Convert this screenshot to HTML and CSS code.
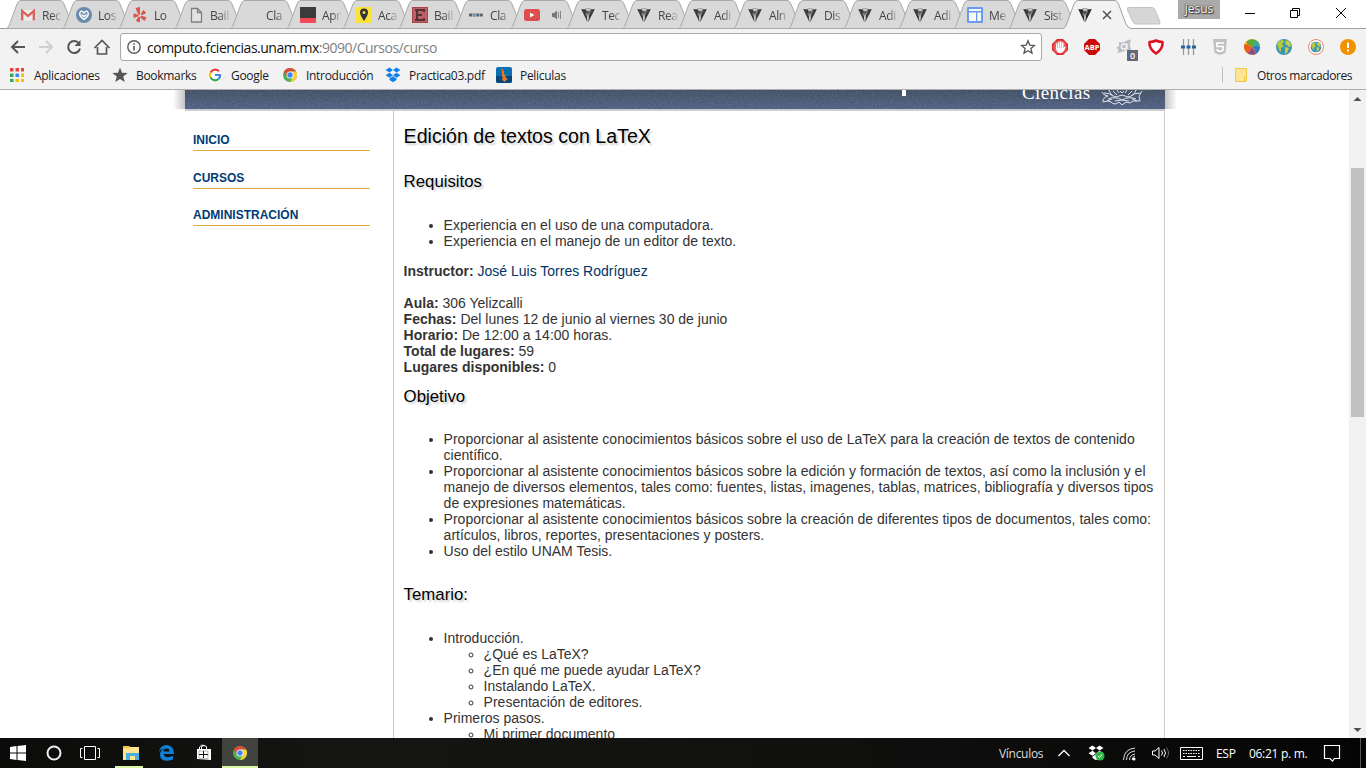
FILE: index.html
```html
<!DOCTYPE html>
<html lang="es">
<head>
<meta charset="utf-8">
<title>Edición de textos con LaTeX</title>
<link rel="stylesheet" href="styles.css">
</head>
<body>
<svg class="defs" width="0" height="0">
  <defs>
    <symbol id="tab" viewBox="0 0 68 29"><path d="M0.5 28.5C2 28 3 26 4 23L11 4Q12.500 .5 15 .5H54Q56.500 .5 58 4L66 24Q67 28 68 28.500Z" fill="#d9d9d9" stroke="#a9a9a9"/></symbol>
    <symbol id="tab-on" viewBox="0 0 68 29"><path d="M0 29C2 28 3 26 4 23L11 4Q12.500 .5 15 .5H52Q54 .5 55.500 4L63 24Q65 28 68 29Z" fill="#f2f2f2"/><path d="M0 28.500C2 28 3 26 4 23L11 4Q12.500 .5 15 .5H52Q54 .5 55.500 4L63 24Q65 28 68 28.500" fill="none" stroke="#a0a0a0"/></symbol>
    <symbol id="shield" viewBox="0 0 16 16"><path d="M3.500 3L6 1h4l2.500 2L11 9l-2 6H7L5 9Z" fill="#a8a8a8"/><path d="M1.200 2L6 2.500 6.500 5 5.500 7 7 9v5L3.500 7ZM14.800 2L10.500 2.500 10.500 5 9 8 8.500 14l4-7Z" fill="#2c2c2c"/><path d="M6 4h3.500l.5 1.500L7.500 8 6 6.500Z" fill="#555"/><path d="M6.500 2h3v1.500h-3zM7 9.500h1.500V12H7z" fill="#d0d0d0"/></symbol>
    <symbol id="chrome" viewBox="0 0 16 16"><circle cx="8" cy="8" r="7" fill="#4caf50"/><path d="M1.900 4.500A7 7 0 0 1 14.100 4.500H8L5 9.700Z" fill="#e0483b"/><path d="M14.100 4.500A7 7 0 0 1 8 15l3-5.300L8 4.500Z" fill="#fbcf3a"/><circle cx="8" cy="8" r="3.500" fill="#fff"/><circle cx="8" cy="8" r="2.700" fill="#4285f4"/></symbol>
    <symbol id="dropbox" viewBox="0 0 16 16"><path d="M4.500 .5L8 3 4.500 5.500 .5 3ZM11.500 .5L15.500 3 11.500 5.500 8 3ZM4.500 5.700L8 8.200 4.500 10.700 .5 8.200ZM11.500 5.700L15.500 8.200 11.500 10.700 8 8.200ZM8 9.300l3.500 2.300V13L8 15.200 4.500 13v-1.400Z"/></symbol>
    <symbol id="globe" viewBox="0 0 16 16"><circle cx="8" cy="8" r="8" fill="#3b93b5"/><path d="M1 5Q3 1 7 1L8 3 6 5l2 2-3 2v4L3 11 2 8Z" fill="#b7ca3c"/><path d="M10 1l4 2 1 4-2 1-2-2-2-1ZM9 8l4 1-2 5-2 1Z" fill="#c8ce40"/></symbol>
  </defs>
</svg>

<header class="browser">
  <div class="tabstrip">
    <div class="tab"><svg class="shape"><use href="#tab"/></svg><svg class="fav" viewBox="0 0 16 16"><path d="M1 3h14v11H1z" fill="#eee"/><path d="M2.200 13.500V4L8 9l5.800-5v9.500" fill="none" stroke="#d9534a" stroke-width="2.300"/></svg><span class="label">Rec</span></div>
    <div class="tab"><svg class="shape"><use href="#tab"/></svg><svg class="fav" viewBox="0 0 16 16"><circle cx="8" cy="8" r="8" fill="#5d82a8"/><path d="M8 6Q5.500 2.500 4 5.500T8 12.500Q13.500 8.500 12 5.500T8 6ZM5.500 7.500L8 9.500l2.500-2" fill="none" stroke="#fff" stroke-width="1.500"/></svg><span class="label">Los</span></div>
    <div class="tab"><svg class="shape"><use href="#tab"/></svg><svg class="fav" viewBox="0 0 16 16" fill="#dc4a3f"><path d="M4 1.500l3.500-1.200v7L6.700 7.500ZM9 7l2.500-3.500 2.300 2.300-4 2ZM9 9.200l5 1.300-1.500 3L8.800 10.500ZM7.500 10V15l-3-1.200 2-3.800ZM6.500 8.600L2 10.500V6.800Z" stroke="#dc4a3f" stroke-linejoin="round"/></svg><span class="label">Lo</span></div>
    <div class="tab"><svg class="shape"><use href="#tab"/></svg><svg class="fav" viewBox="0 0 16 16"><path d="M3.500 1.500h6l4 4v9.500h-10zM9.500 1.500v4h4" fill="#e5e5e5" stroke="#777" stroke-width="1.300"/></svg><span class="label">Bail</span></div>
    <div class="tab"><svg class="shape"><use href="#tab"/></svg><svg class="fav"></svg><span class="label">Cla</span></div>
    <div class="tab"><svg class="shape"><use href="#tab"/></svg><svg class="fav" viewBox="0 0 16 16"><path d="M0 0h16v11H0z" fill="#2b2b2b"/><path d="M0 11h16v5H0z" fill="#f53c48"/></svg><span class="label">Apr</span></div>
    <div class="tab"><svg class="shape"><use href="#tab"/></svg><svg class="fav" viewBox="0 0 16 16"><path d="M0 0h16v16H0z" fill="#fee32a"/><path d="M8 1.500a4 4 0 0 1 4 4Q12 8 8 14 4 8 4 5.500A4 4 0 0 1 8 1.500Z" fill="#222"/><circle cx="8" cy="5.500" r="1.500" fill="#fbe032"/></svg><span class="label">Aca</span></div>
    <div class="tab"><svg class="shape"><use href="#tab"/></svg><svg class="fav" viewBox="0 0 16 16"><path d="M0 0h16v16H0z" fill="#a8323a"/><path d="M1 1h14v14H1z" fill="#bd525a"/><path d="M12 5V3H5v10h7v-2M5 8h5M3 3h3M3 13h3" fill="none" stroke="#402027" stroke-width="2"/></svg><span class="label">Bail</span></div>
    <div class="tab"><svg class="shape"><use href="#tab"/></svg><svg class="fav" viewBox="0 0 16 16"><path d="M1 8h14" stroke="#555" stroke-width="3" stroke-dasharray="3 .6"/><path d="M5 8h4" stroke="#5c98d0" stroke-width="2"/></svg><span class="label">Cla</span></div>
    <div class="tab"><svg class="shape"><use href="#tab"/></svg><svg class="fav" viewBox="0 0 16 16"><rect y="2" width="16" height="12" rx="2.500" fill="#df4040"/><path d="M6 5.500v5L10.500 8z" fill="#fff"/></svg><svg class="audio" viewBox="0 0 12 12"><path d="M1 4h2l3-2.500v9L3 8H1z" fill="#777"/><path d="M7.500 3v6M9.500 2v8" stroke="#888"/></svg></div>
    <div class="tab"><svg class="shape"><use href="#tab"/></svg><svg class="fav"><use href="#shield"/></svg><span class="label">Tec</span></div>
    <div class="tab"><svg class="shape"><use href="#tab"/></svg><svg class="fav"><use href="#shield"/></svg><span class="label">Rea</span></div>
    <div class="tab narrow"><svg class="shape"><use href="#tab"/></svg><svg class="fav"><use href="#shield"/></svg><span class="label">Adi</span></div>
    <div class="tab narrow"><svg class="shape"><use href="#tab"/></svg><svg class="fav"><use href="#shield"/></svg><span class="label">Aln</span></div>
    <div class="tab narrow"><svg class="shape"><use href="#tab"/></svg><svg class="fav"><use href="#shield"/></svg><span class="label">Dis</span></div>
    <div class="tab narrow"><svg class="shape"><use href="#tab"/></svg><svg class="fav"><use href="#shield"/></svg><span class="label">Adi</span></div>
    <div class="tab narrow"><svg class="shape"><use href="#tab"/></svg><svg class="fav"><use href="#shield"/></svg><span class="label">Adi</span></div>
    <div class="tab narrow"><svg class="shape"><use href="#tab"/></svg><svg class="fav" viewBox="0 0 16 16"><rect width="16" height="16" rx="1" fill="#5c96f2"/><path d="M2 2h12v2H2zM2 5.500h7V14H2zM10.300 5.500H14V14h-3.700z" fill="#fff"/></svg><span class="label">Me</span></div>
    <div class="tab narrow"><svg class="shape"><use href="#tab"/></svg><svg class="fav"><use href="#shield"/></svg><span class="label">Sist</span></div>
    <div class="tab narrow active"><svg class="shape"><use href="#tab-on"/></svg><svg class="fav"><use href="#shield"/></svg><svg class="close" viewBox="0 0 10 10"><path d="M1 1l8 8M9 1L1 9" stroke="#555" stroke-width="1.600"/></svg></div>
    <svg class="newtab" viewBox="0 0 36 18"><path d="M3 .5H26Q28 .5 29 3L34 15Q34.500 17 33 17H10Q8 17 7 15L1.500 3Q.5.5 3 .5Z" fill="#d6d6d6" stroke="#c2c2c2"/></svg>
    <span class="user">jesus</span>
    <svg class="winbtns" viewBox="0 0 120 28" fill="none" stroke="#000"><path d="M3 13.500h10M48.500 10.500h7v7h-7zM50.500 10.500v-2h7v7h-2M94 8l10 10M104 8L94 18"/></svg>
  </div>

  <div class="toolbar">
    <svg class="nav" viewBox="0 0 112 24" fill="none" stroke-width="2"><path d="M25 12H12.500M18 6l-6 6 6 6" stroke="#555"/><path d="M39 12h12.500M46 6l6 6-6 6" stroke="#cfcfcf"/><path d="M79 8.500A6 6 0 1 0 80 13.500" stroke="#555"/><path d="M80.500 5v6h-6z" fill="#555"/><path d="M94.500 13L102 5.500 109.500 13M97.500 12v7h9v-7" stroke="#555" stroke-width="1.700"/></svg>
    <div class="omnibox">
      <svg class="info" viewBox="0 0 14 14"><circle cx="7" cy="7" r="6.200" fill="none" stroke="#5a5a5a" stroke-width="1.400"/><path d="M7 6v4.500M7 3.300v1.500" stroke="#5a5a5a" stroke-width="1.600"/></svg>
      <span class="url">computo.fciencias.unam.mx<span>:9090/Cursos/curso</span></span>
      <svg class="star" viewBox="0 0 16 16"><path d="M8 1.800l1.800 4.300 4.700.4-3.600 3 1.100 4.600L8 11.700l-4 2.400 1.100-4.600-3.600-3 4.700-.4z" fill="none" stroke="#555" stroke-width="1.300"/></svg>
    </div>
    <div class="exts">
      <svg viewBox="0 0 16 16"><path d="M5 0h6l5 5v6l-5 5H5l-5-5V5z" fill="#e1262d"/><circle cx="8" cy="8" r="6.800" fill="#e75f5f"/><path d="M4.800 5v5M6.800 3.500V9M8.800 3v6M10.800 4v7" stroke="#fff" stroke-width="1.500" stroke-linecap="round"/><path d="M4.100 9h7.500l1-1.500 1 .5q-2 6-5.500 6-4 0-4-5z" fill="#fff"/></svg>
      <svg viewBox="0 0 16 16"><path d="M5 0h6l5 5v6l-5 5H5l-5-5V5z" fill="#cb0909"/><text x="8" y="10.600" class="abp">ABP</text></svg>
      <div class="avast"><svg viewBox="0 0 16 16"><path d="M3 3l4 .5L12 1l3-.5-1 4.500.5 4 1 3-5-1-5 2-4 1 1-4-2.500-1 3-2z" fill="#bbbdc8"/><circle cx="8" cy="7.500" r="2.600" fill="none" stroke="#f2f2f2" stroke-width="1.500"/><path d="M11 4.500v6" stroke="#f2f2f2" stroke-width="1.300"/></svg><span class="count">0</span></div>
      <svg viewBox="0 0 16 16"><path d="M8 1.500Q11 3 14.500 3 15 10 8 14.500 1 10 1.500 3 5 3 8 1.500Z" fill="#fff" stroke="#e1121f" stroke-width="2.600" stroke-linejoin="round"/></svg>
      <svg viewBox="0 0 16 16"><path d="M3.500 0v16M8.500 0v16M13.500 0v16" stroke="#999" stroke-width="1.300"/><path d="M1 6.500h4v3H1zM6.500 6.500h4v3h-4zM12 6.500h4v3h-4z" fill="#2d609f"/></svg>
      <svg viewBox="0 0 16 16"><path d="M1 0h14l-1.500 14L8 16l-5.500-2z" fill="#c1c1c1"/><path d="M12 4H4.700L5 7.500h6.300L10.800 11.500 8 12.300 5.300 11.500V10" fill="none" stroke="#fff" stroke-width="1.600"/></svg>
      <svg viewBox="0 0 16 16"><circle cx="8" cy="8" r="8" fill="#f2c022"/><path d="M8 8Q3 7 2.500 2.500 7-1 11 .700 12 3 8 8Z" fill="#56ac35"/><path d="M8 8Q4 3 .5 5-1 10 2.500 13.500 7 13 8 8Z" fill="#ef5a24"/><path d="M8 8Q6 14 2.500 13.500 6 16.500 11 15.400 11.500 11 8 8Z" fill="#8a4a92"/><path d="M8 8q4 2 3 7.400Q16 13 16 8 12 5 8 8Z" fill="#3477c2"/><path d="M8 8Q11 5 11 .7 16 3 16 8 12 6 8 8Z" fill="#39a7a0"/><path d="M8 8Q3 7 2.500 2.500L.5 5Q4 5 8 8Z" fill="#f2c022"/></svg>
      <svg viewBox="0 0 16 16"><use href="#globe"/></svg>
      <svg viewBox="0 0 16 16"><circle cx="8" cy="8" r="7.500" fill="#fff" stroke="#ef8267"/><use href="#globe" x="2.500" y="2.500" width="11" height="11"/></svg>
      <svg viewBox="0 0 16 16"><circle cx="8" cy="8" r="8" fill="#f29100"/><path d="M8 3.500v5.500M8 10.500v2" stroke="#fff" stroke-width="2"/></svg>
    </div>
  </div>

  <div class="bookmarks">
    <div class="bm b1"><svg viewBox="0 0 16 16"><path d="M1 1h3.500v3.500H1zM6.500 1H10v3.500H6.500zM12 1h3v3.500h-3z" fill="#e7443a"/><path d="M1 6.500h3.500V10H1z" fill="#35a853"/><path d="M6.500 6.500H10V10H6.500z" fill="#4285f4"/><path d="M12 6.500h3V10h-3zM6.500 12H10v3H6.500zM12 12h3v3h-3z" fill="#fbbc05"/><path d="M1 12h3.500v3H1z" fill="#35a853"/></svg><span>Aplicaciones</span></div>
    <div class="bm b2"><svg viewBox="0 0 16 16"><path d="M8 .5l2 5.300 5.700.2-4.500 3.500 1.600 5.500L8 12l-4.800 3 1.600-5.500L.3 6l5.700-.2z" fill="#555"/></svg><span>Bookmarks</span></div>
    <div class="bm b3"><svg viewBox="0 0 16 16"><circle cx="8" cy="8" r="7.500" fill="#fff"/><g fill="none" stroke-width="2.200"><path d="M12 4.200A5.200 5.200 0 0 0 3.500 5.500" stroke="#ea4335"/><path d="M3.500 5.500a5.200 5.200 0 0 0 0 5" stroke="#fbbc05"/><path d="M3.500 10.500A5.200 5.200 0 0 0 11.500 12" stroke="#34a853"/><path d="M11.500 12Q13.200 10.500 13.200 8H8" stroke="#4285f4"/></g></svg><span>Google</span></div>
    <div class="bm b4"><svg><use href="#chrome"/></svg><span>Introducción</span></div>
    <div class="bm b5"><svg fill="#1081ea"><use href="#dropbox"/></svg><span>Practica03.pdf</span></div>
    <div class="bm b6"><svg viewBox="0 0 16 16"><rect width="16" height="16" rx="2" fill="#096db0"/><path d="M0 9h16v5q0 2-2 2H2q-2 0-2-2z" fill="#07457d"/><path d="M5 1.500Q9 3 8 8l2.500-1Q8.500 9 10 11l2 .5L8.500 15 5 11.500l2 .5Q5.500 9 6 6 6 3 5 1.500Z" fill="#e97925"/></svg><span>Peliculas</span></div>
    <div class="bm others"><svg viewBox="0 0 16 16"><path d="M2.500 1.500h11v10l-1 3h-10z" fill="#ffe494" stroke="#edc849"/><path d="M11.500 14v-4h2v4z" fill="#ffe494" stroke="#edc849"/></svg><span>Otros marcadores</span></div>
  </div>
</header>

<div class="viewport">
  <div class="canvas">
    <div class="banner-row">
      <div class="fade left"></div>
      <div class="banner">
        <svg class="noise" width="980" height="19"><filter id="grain"><feTurbulence type="fractalNoise" baseFrequency=".55" numOctaves="2" seed="4"/><feColorMatrix values="0 0 0 0 .55  0 0 0 0 .6  0 0 0 0 .66  .9 0 0 0 -.32"/></filter><rect width="980" height="19" filter="url(#grain)"/></svg>
        <i class="stem"></i>
        <span class="school">Ciencias</span>
        <svg class="crest" viewBox="0 0 42 17" fill="none" stroke="#dde2ea"><path d="M1 2q2 4 6 4-6 2-5 6 5-2 8 0 1 2 5 2l3-2 3 3 4-3 4 1 3-2 7 0-1-5 3-5M8 0q2 6 7 7l6-2 6 2q6-1 8-7M3 3q6 0 9 3M39 3q-6 0-9 3M7 9q7-3 14 1 7-4 14-1M16 0l2 3M26 0l-2 3M19 1l2 2 2-2M12 1l4 4M31 1l-4 4M14 11l7-1 7 1M6 11l5-2M36 11l-5-2"/></svg>
      </div>
      <div class="fade right"></div>
    </div>
    <div class="page">
      <nav class="menu"><a>INICIO</a><a>CURSOS</a><a>ADMINISTRACIÓN</a></nav>
      <main class="course">
        <h1>Edición de textos con LaTeX</h1>
        <h2 class="req">Requisitos</h2>
        <ul>
          <li>Experiencia en el uso de una computadora.</li>
          <li>Experiencia en el manejo de un editor de texto.</li>
        </ul>
        <p><b>Instructor:</b> <a>José Luis Torres Rodríguez</a><br><br>
        <b>Aula:</b> 306 Yelizcalli<br>
        <b>Fechas:</b> Del lunes 12 de junio al viernes 30 de junio<br>
        <b>Horario:</b> De 12:00 a 14:00 horas.<br>
        <b>Total de lugares:</b> 59<br>
        <b>Lugares disponibles:</b> 0</p>
        <h2 class="goal">Objetivo</h2>
        <ul>
          <li>Proporcionar al asistente conocimientos básicos sobre el uso de LaTeX para la creación de textos de contenido científico.</li>
          <li>Proporcionar al asistente conocimientos básicos sobre la edición y formación de textos, así como la inclusión y el manejo de diversos elementos, tales como: fuentes, listas, imagenes, tablas, matrices, bibliografía y diversos tipos de expresiones matemáticas.</li>
          <li>Proporcionar al asistente conocimientos básicos sobre la creación de diferentes tipos de documentos, tales como: artículos, libros, reportes, presentaciones y posters.</li>
          <li>Uso del estilo UNAM Tesis.</li>
        </ul>
        <h2 class="topics">Temario:</h2>
        <ul>
          <li>Introducción.
            <ul>
              <li>¿Qué es LaTeX?</li>
              <li>¿En qué me puede ayudar LaTeX?</li>
              <li>Instalando LaTeX.</li>
              <li>Presentación de editores.</li>
            </ul>
          </li>
          <li>Primeros pasos.
            <ul><li>Mi primer documento</li></ul>
          </li>
        </ul>
      </main>
    </div>
  </div>
  <div class="scrollbar">
    <svg viewBox="0 0 17 17"><path d="M4.500 11L8.500 7l4 4z" fill="#505050"/></svg>
    <div class="thumb"></div>
    <svg class="down" viewBox="0 0 17 17"><path d="M4.500 7l4 4 4-4z" fill="#505050"/></svg>
  </div>
</div>

<footer class="taskbar">
  <div class="task"><svg viewBox="0 0 36 30" fill="#fff"><path d="M10 9l6.500-1v6.500H10zM17.500 8L26 7v7.500h-8.500zM10 15.500h6.500V22L10 21zM17.500 15.500H26V23l-8.500-1z"/></svg></div>
  <div class="task"><svg viewBox="0 0 36 30"><circle cx="18" cy="15" r="6.500" fill="none" stroke="#eee" stroke-width="2"/></svg></div>
  <div class="task"><svg viewBox="0 0 36 30" fill="none" stroke="#fff"><path d="M12.500 8.500h11v13h-11zM10.500 10.500h-2v9h2M25.500 10.500h2v9h-2"/></svg></div>
  <div class="task t-files"><svg viewBox="0 0 36 30"><path d="M13 8h6l1 1h9v13H13z" fill="#ffe48f"/><path d="M13 8h6v2.500h-6z" fill="#f7c443"/><path d="M16 22v-7h13v7h-4v-4h-5v4z" fill="#48b0e2"/></svg></div>
  <div class="task t-edge"><svg viewBox="0 0 36 30"><path d="M11 14q1-7 8-7 7 1 7 9H15.500q1 5 9.500 2v3.500q-13 4-13-5 0-4 4-6-3 0-5 3.500ZM15.500 13.500h6q0-3-3-3t-3 3Z" fill="#0f80d7" fill-rule="evenodd"/></svg></div>
  <div class="task t-store"><svg viewBox="0 0 36 30"><path d="M11 11h14v11l-14-1z" fill="#fff"/><path d="M15.500 11V8.500q2.500-2 5 0V11M13.500 11V9q2-3 5-1.500" fill="none" stroke="#fff"/><path d="M13 16.500h9M17.500 13v7" stroke="#111"/><path d="M13 13v7.200M22 13v7.500M13 13h9M13 20.200l9 .5" stroke="#111" stroke-width=".3" fill="none"/></svg></div>
  <div class="task t-chrome"><svg viewBox="0 0 36 30"><use href="#chrome" x="10" y="7" width="16" height="16"/></svg></div>
  <div class="tray">
    <span class="links">Vínculos</span>
    <svg class="glyphs" viewBox="0 0 160 30" fill="none" stroke="#fff"><path d="M8.500 18l5.500-5.500 5.500 5.500" stroke-width="1.300"/><use href="#dropbox" x="38" y="7" width="16" height="16" fill="#fff" stroke="none"/><circle cx="50" cy="18" r="4.500" fill="#2eb844" stroke="none"/><path d="M48 18l1.500 1.500 2.500-3"/><path d="M73.500 22Q74 11 85 10M76.500 22q0-8 8.500-9M79.500 22q0-5 5.500-6M82 22q0-3 3-4" stroke="#ddd"/><circle cx="84" cy="21" r="1.500" fill="#fff" stroke="none"/><path d="M102.500 13h2.500l4-3.500v11L105 17h-2.500zM111.500 12.500q2 2.500 0 5M114 11q3 4 0 8"/><path d="M116.500 9.500q4 5.500 0 11" stroke="#666"/><path d="M130.500 9.500h22v12h-22z"/><path d="M133 12.500h17M133 15.500h17" stroke-dasharray="1.500 1"/><path d="M133 18.500h2M137 18.500h9M148 18.500h2"/></svg>
    <span class="lang">ESP</span>
    <span class="clock">06:21 p. m.</span>
    <svg class="action" viewBox="0 0 20 20" fill="none" stroke="#fff" stroke-width="1.200"><path d="M2.500 2.500h15v13h-5l-2 2.500-2.500-2.500H2.500z"/></svg>
    <i class="peek"></i>
  </div>
</footer>
</body>
</html>
```
FILE: styles.css
```css
* { box-sizing: border-box; }
body { margin: 0; width: 1366px; height: 768px; overflow: hidden; display: flex; flex-direction: column; background: #fff; font-family: "Liberation Sans", Arial, sans-serif; }
svg { display: block; flex: none; }
.defs { position: absolute; }

/* browser chrome */
.browser { height: 90px; flex: none; background: #f2f2f2; border-bottom: 1px solid #aeaeae; font: 12px "Open Sans", "Noto Sans", sans-serif; color: #1b1b1b; }
.tabstrip { height: 29px; display: flex; background: #fff; border-bottom: 1px solid #a0a0a0; padding-left: 6px; }
.tab { position: relative; width: 56px; height: 29px; flex: none; display: flex; align-items: center; padding-left: 14px; }
.tab.narrow { width: 55px; }
.tab.active { z-index: 2; }
.shape { position: absolute; left: 0; top: 0; width: 68px; height: 29px; }
.fav { position: relative; width: 16px; height: 16px; z-index: 1; margin-top: 1px; }
.tab:not(.active) .fav { opacity: .9; }
.label { position: relative; z-index: 1; width: 21px; margin-left: 6px; margin-top: 1px; white-space: nowrap; letter-spacing: -.4px; color: #444; -webkit-mask-image: linear-gradient(90deg, #000 50%, rgba(0,0,0,.25) 90%); mask-image: linear-gradient(90deg, #000 50%, rgba(0,0,0,.25) 90%); }
.audio { position: relative; z-index: 1; width: 12px; height: 12px; margin-left: 11px; }
.close { position: relative; z-index: 1; width: 10px; height: 10px; margin-left: 9px; margin-top: 1px; }
.newtab { width: 36px; height: 18px; margin: 7px 0 0 8px; }
.user { width: 42px; height: 19px; margin-left: 16px; background: #aaa; color: #fff; text-align: center; line-height: 17px; text-shadow: 0 0 1px #222, 0 0 2px #333, 1px 1px 1px #333; }
.winbtns { width: 120px; height: 28px; margin-left: 22px; }
.toolbar { height: 36px; display: flex; align-items: center; }
.nav { width: 112px; height: 24px; }
.omnibox { width: 922px; height: 28px; margin-left: 8px; border: 1px solid #a9a9a9; border-radius: 3px; background: #fff; display: flex; align-items: center; margin-top: 0; padding: 0 5px 0 6px; }
.info { width: 14px; height: 14px; }
.url { margin-left: 6px; font-size: 14px; letter-spacing: -.49px; color: #111; flex: 1; white-space: nowrap; }
.url span { color: #808080; }
.star { width: 16px; height: 16px; }
.exts { display: flex; gap: 16px; margin-left: 10px; margin-top: -1px; }
.exts svg { width: 16px; height: 16px; }
.abp { font: bold 7.5px "Open Sans", sans-serif; fill: #fff; text-anchor: middle; }
.avast { position: relative; width: 16px; }
.count { position: absolute; left: 11px; top: 11px; width: 11px; height: 11px; background: #666778; color: #fff; font: 600 9px/11px "Open Sans", sans-serif; text-align: center; }
.bookmarks { height: 24px; display: grid; grid-template-columns: 103px 95px 75px 103px 111px 726px 141px; padding-left: 9px; align-items: center; margin-top: -2px; }
.bm { display: flex; align-items: center; gap: 8px; white-space: nowrap; letter-spacing: -.3px; }
.b1 { gap: 9px; }
.bm svg { width: 16px; height: 16px; }
.others { height: 16px; border-left: 1px solid #c0c0c0; padding-left: 10px; letter-spacing: -.4px; }

/* document */
.viewport { height: 648px; flex: none; display: flex; }
.canvas { width: 1349px; padding-left: 173px; overflow: hidden; }
.banner-row { display: flex; height: 19px; }
.fade { width: 12px; }
.fade.left { background: linear-gradient(90deg, #fff, #c4c4c4); }
.fade.right { background: linear-gradient(90deg, #c4c4c4, #fff); }
.banner { position: relative; width: 980px; overflow: hidden; background: linear-gradient(#435164, #4f6084); }
.noise { position: absolute; left: 0; top: 0; opacity: .3; }
.stem { position: absolute; left: 717px; top: 0; width: 4px; height: 6px; background: #fff; }
.school { position: absolute; left: 837px; top: -7px; font: 19px/20px "Liberation Serif", serif; letter-spacing: .4px; color: #fff; }
.crest { position: absolute; left: 916px; top: 0; width: 42px; height: 17px; }
.page { width: 980px; height: 640px; margin-left: 12px; border-top: 2px solid #ccc; border-right: 1px solid #ccc; display: flex; }
.menu { width: 208px; padding: 21px 0 0 8px; display: flex; flex-direction: column; gap: 20px; }
.menu a { width: 177px; height: 17.600px; border-bottom: 1px solid #e0aa3e; color: #003b75; font-weight: bold; font-size: 12px; line-height: 14px; }
.menu a:first-child { height: 19px; line-height: 17px; }
.menu a:last-child { line-height: 13px; }
.course { width: 771px; border-left: 1px solid #ccc; padding: 14px 10px 0 9.600px; font-size: 14px; line-height: 16px; color: #333; }
.course h1, .course h2 { margin: 0; color: #000; font-weight: normal; text-shadow: 2px 2px 2px #ccc; }
.course h1 { font-size: 19.600px; line-height: 22px; }
.course h2 { font-size: 16.800px; line-height: 20px; }
.course h2.req { margin: 25px 0 25px; }
.course h2.goal { margin: 12px 0 24px; }
.course h2.topics { margin: 26px 0 25px; }
.course ul { margin: 0; padding-left: 40px; }
.course p { margin: 14px 0 0; }
.course p a { color: #003366; }
.scrollbar { width: 17px; background: #f1f1f1; display: flex; flex-direction: column; align-items: center; }
.scrollbar svg { width: 17px; height: 17px; }
.thumb { width: 13px; height: 249px; margin-top: 61px; background: #c1c1c1; }
.scrollbar .down { margin-top: auto; }

/* taskbar */
.taskbar { height: 30px; flex: none; display: flex; background: linear-gradient(90deg, #0b0c0a, #151614 25%, #10110f 60%, #050505); color: #fff; }
.task { width: 36px; height: 30px; }
.task svg { width: 36px; height: 30px; }
.t-files { width: 28px; margin-left: 7px; border-bottom: 2px solid #d9f7a5; }
.t-files svg { margin-left: -5px; }
.t-edge { margin-left: 5px; }
.t-store { margin-left: 2px; }
.t-chrome { background: #41433f; border-bottom: 2px solid #d9f7a5; }
.tray { margin-left: auto; width: 367px; display: flex; align-items: center; font: 12px "Open Sans", "Noto Sans", sans-serif; letter-spacing: -.3px; white-space: nowrap; }
.links { width: 51px; color: #ddd; }
.glyphs { width: 160px; height: 30px; }
.lang { width: 33px; margin-left: 6px; }
.clock { width: 73px; }
.action { width: 20px; height: 20px; }
.peek { width: 1px; height: 30px; margin-left: 18px; background: #555; }
```
